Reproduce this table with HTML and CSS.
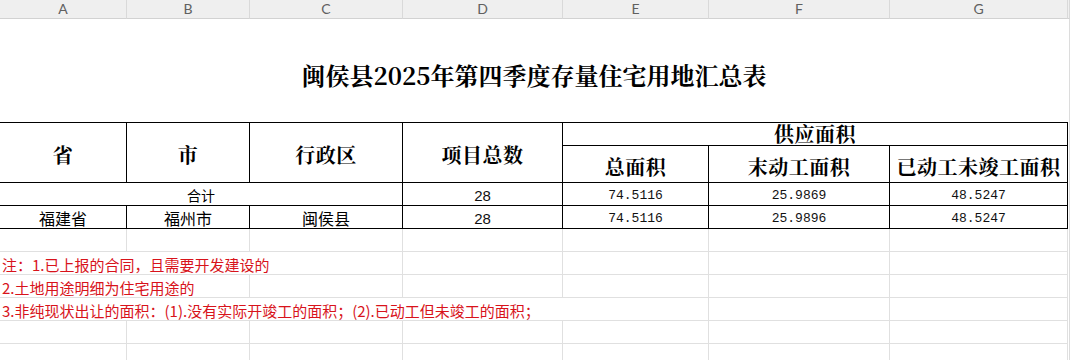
FILE: index.html
```html
<!DOCTYPE html>
<html lang="zh-CN">
<head>
<meta charset="utf-8">
<title>闽侯县2025年第四季度存量住宅用地汇总表</title>
<link rel="stylesheet" href="styles.css">
</head>
<body>
<div class="sheet">
  <!-- column headers -->
  <div class="ch">A</div>
  <div class="ch">B</div>
  <div class="ch">C</div>
  <div class="ch">D</div>
  <div class="ch">E</div>
  <div class="ch">F</div>
  <div class="ch">G</div>
  <div class="ch ch-end"></div>

  <!-- title -->
  <div class="title span7">闽侯县2025年第四季度存量住宅用地汇总表</div>
  <div class="edge"></div>

  <!-- table header -->
  <div class="t th rows2">省</div>
  <div class="t th rows2">市</div>
  <div class="t th rows2">行政区</div>
  <div class="t th rows2">项目总数</div>
  <div class="t th th-group span3">供应面积</div>
  <div class="edge rows2"></div>
  <div class="t th th-sub">总面积</div>
  <div class="t th th-sub">末动工面积</div>
  <div class="t th th-sub">已动工未竣工面积</div>

  <!-- totals -->
  <div class="t td span3 small">合计</div>
  <div class="t td num-sans">28</div>
  <div class="t td num">74.5116</div>
  <div class="t td num">25.9869</div>
  <div class="t td num">48.5247</div>
  <div class="edge"></div>

  <!-- data row -->
  <div class="t td cn">福建省</div>
  <div class="t td cn">福州市</div>
  <div class="t td cn">闽侯县</div>
  <div class="t td num-sans">28</div>
  <div class="t td num">74.5116</div>
  <div class="t td num">25.9896</div>
  <div class="t td num">48.5247</div>
  <div class="edge"></div>

  <!-- empty row -->
  <div class="c"></div><div class="c"></div><div class="c"></div><div class="c"></div>
  <div class="c"></div><div class="c"></div><div class="c"></div><div class="edge"></div>

  <!-- notes -->
  <div class="c note span3">注：1.已上报的合同，且需要开发建设的</div>
  <div class="c"></div><div class="c"></div><div class="c"></div><div class="c"></div><div class="edge"></div>

  <div class="c note span2">2.土地用途明细为住宅用途的</div>
  <div class="c"></div><div class="c"></div><div class="c"></div><div class="c"></div><div class="c"></div><div class="edge"></div>

  <div class="c note span5">3.非纯现状出让的面积：(1).没有实际开竣工的面积；(2).已动工但未竣工的面积；</div>
  <div class="c"></div><div class="c"></div><div class="edge"></div>

  <!-- empty rows -->
  <div class="c"></div><div class="c"></div><div class="c"></div><div class="c"></div>
  <div class="c"></div><div class="c"></div><div class="c"></div><div class="edge"></div>
  <div class="c"></div><div class="c"></div><div class="c"></div><div class="c"></div>
  <div class="c"></div><div class="c"></div><div class="c"></div><div class="edge"></div>
</div>
</body>
</html>
```
FILE: styles.css
```css
* {
  box-sizing: border-box;
}

html, body {
  margin: 0;
  padding: 0;
  background: #ffffff;
}

body {
  width: 1071px;
  height: 360px;
  overflow: hidden;
  font-family: "Noto Sans CJK SC", "Noto Sans", sans-serif;
  color: #000;
}

.sheet {
  display: grid;
  grid-template-columns: 127px 123px 153px 160px 146px 181px 178px 2px;
  grid-template-rows: 19px 104px 23px 37px 23px 23px 23px 23px 23px 23px 23px 23px;
}

/* spreadsheet column header */
.ch {
  background: #efefef;
  border-right: 1px solid #d9d9d9;
  border-bottom: 1px solid #d2d2d2;
  display: flex;
  align-items: center;
  justify-content: center;
  font-family: "Lato", "Noto Sans", sans-serif;
  font-size: 14px;
  color: #606060;
  line-height: 1;
  padding-bottom: 1px;
}

.ch-end {
  border-right: 1px solid #d9d9d9;
}

/* plain grid cells */
.c {
  border-right: 1px solid #e0e0e0;
  border-bottom: 1px solid #e0e0e0;
}

.edge {
  border-right: 1px solid #dcdcdc;
}

.span2 { grid-column: span 2; }
.span3 { grid-column: span 3; }
.span5 { grid-column: span 5; }
.span7 { grid-column: span 7; }
.rows2 { grid-row: span 2; }

.title {
  border-bottom: 1px solid #000;
  display: flex;
  align-items: center;
  justify-content: center;
  padding-top: 9px;
  font-family: "Noto Serif CJK SC", "Noto Sans CJK SC", serif;
  font-weight: 700;
  font-size: 24px;
  line-height: 1;
}

/* table cells */
.t {
  border-right: 1px solid #000;
  border-bottom: 1px solid #000;
  display: flex;
  align-items: center;
  justify-content: center;
  white-space: nowrap;
}

.th {
  font-family: "Noto Serif CJK SC", "Noto Sans CJK SC", serif;
  font-weight: 700;
  font-size: 20px;
  letter-spacing: 0.5px;
  line-height: 1;
  padding-top: 5px;
}

.th-group {
  padding-top: 0;
  line-height: 20px;
}

.th-sub {
  padding-top: 6px;
}

.td {
  padding-top: 2px;
  line-height: 1;
}

.small {
  font-size: 14px;
}

.cn {
  font-size: 16px;
}

.num {
  font-family: "Liberation Mono", "DejaVu Sans Mono", monospace;
  font-size: 13px;
  color: #111;
}

.num-sans {
  font-family: "Liberation Sans", Arial, sans-serif;
  font-size: 15px;
  color: #111;
}

.note {
  display: flex;
  align-items: center;
  padding-left: 2px;
  padding-top: 3px;
  font-size: 15px;
  line-height: 1;
  color: #d8131b;
  white-space: nowrap;
}
```
